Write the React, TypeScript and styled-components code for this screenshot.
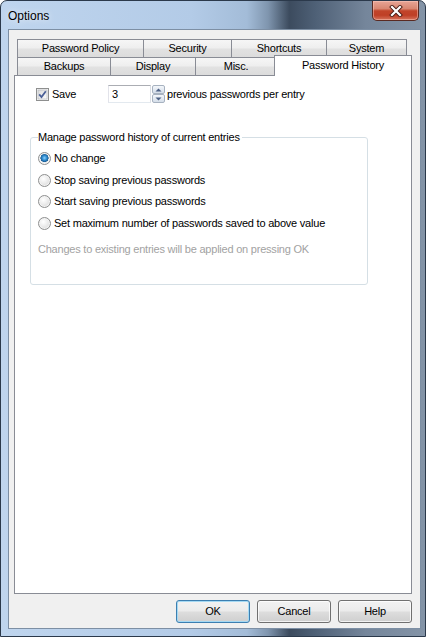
import React from 'react';
import styled, { createGlobalStyle } from 'styled-components';

const Global = createGlobalStyle`
  html, body { margin: 0; padding: 0; background: #ffffff; }
  body {
    width: 426px; height: 637px; overflow: hidden;
    font-family: "Liberation Sans", Arial, sans-serif;
    font-size: 11px; line-height: 13px; color: #000;
    letter-spacing: -0.22px;
  }
  * { box-sizing: border-box; }
`;

const Window = styled.div`
  width: 426px;
  height: 637px;
  border: 1px solid #2b394b;
  border-radius: 7px 7px 0 0;
  background: linear-gradient(90deg, #bfd5ee 0%, #b3cbe7 45%, #a3bcd8 58%, #7f95ae 63%, #3c4b5e 68%, #4e6076 74%, #75869b 86%, #8494a7 100%);
  display: flex;
  flex-direction: column;
  padding: 0 4px 7px 7px;
  overflow: hidden;
`;

const TitleBar = styled.div`
  height: 28px;
  display: flex;
  align-items: flex-start;
  justify-content: space-between;
`;

const Title = styled.div`
  font-size: 12px;
  line-height: 14px;
  letter-spacing: 0;
  margin-top: 8px;
  color: #000;
  text-shadow: 0 0 6px rgba(255, 255, 255, 0.9);
`;

const CloseButton = styled.div`
  width: 47px;
  height: 20px;
  margin-right: 2px;
  border: 1px solid #5a2a22;
  border-top: none;
  border-radius: 0 0 5px 5px;
  background: linear-gradient(180deg, #e8a596 0%, #d98772 40%, #c1442a 52%, #bf3f26 75%, #d6735c 100%);
  box-shadow: inset 0 0 0 1px rgba(255, 210, 200, 0.45);
  display: flex;
  align-items: center;
  justify-content: center;
`;

const Client = styled.div`
  flex: 1;
  background: #f0f0f0;
  border: 1px solid #7d8fa4;
  display: flex;
  flex-direction: column;
  padding: 9px 8px 5px 5px;
`;

const TabRow = styled.div`
  display: flex;
  height: 18px;
  padding-left: 3px;
  align-items: flex-start;
`;

const Tab = styled.div<{ $w: number; $selected?: boolean; $first?: boolean }>`
  width: ${p => p.$w}px;
  flex: none;
  height: ${p => (p.$selected ? 21 : 18)}px;
  margin-top: ${p => (p.$selected ? -2 : 0)}px;
  margin-left: ${p => (p.$first ? 0 : p.$selected ? -3 : -1)}px;
  border: 1px solid #898c95;
  border-bottom: none;
  background: ${p =>
    p.$selected
      ? '#ffffff'
      : 'linear-gradient(180deg, #f6f6f6 0%, #eeeeee 48%, #e2e2e2 52%, #dcdcdc 100%)'};
  display: flex;
  align-items: center;
  justify-content: center;
  position: relative;
  z-index: ${p => (p.$selected ? 2 : 1)};
  padding-bottom: ${p => (p.$selected ? 2 : 0)}px;
`;

const Panel = styled.div`
  flex: 1;
  background: #ffffff;
  border: 1px solid #898c95;
  display: flex;
  flex-direction: column;
  padding: 9px 0 0 21px;
`;

const SaveRow = styled.div`
  display: flex;
  align-items: center;
  height: 18px;
`;

const CheckLabel = styled.label`
  width: 72px;
  display: flex;
  align-items: center;
  gap: 3px;
`;

const Box = styled.span`
  width: 13px;
  height: 13px;
  display: inline-flex;
  flex: none;
`;

const SpinEdit = styled.div`
  display: flex;
  align-items: stretch;
  height: 18px;
`;

const Edit = styled.div`
  width: 43px;
  height: 18px;
  border: 1px solid #abadb3;
  border-left-color: #e2e3ea;
  border-right-color: #dbdfe6;
  border-bottom-color: #e3e9ef;
  background: #fff;
  padding: 2px 0 0 3px;
`;

const SpinButtons = styled.div`
  width: 13px;
  margin-left: 1px;
  display: flex;
  flex-direction: column;
`;

const SpinBtn = styled.div`
  flex: 1;
  border: 1px solid #a7b2c0;
  border-radius: 2px;
  background: linear-gradient(180deg, #f4f7fb 0%, #e4eaf2 50%, #d5dee9 100%);
  display: flex;
  align-items: center;
  justify-content: center;
`;

const AfterText = styled.span`
  margin-left: 2px;
`;

const Group = styled.fieldset`
  width: 338px;
  margin: 28px 0 0 -6px;
  border: 1px solid #d5dfe5;
  border-radius: 3px;
  padding: 0 0 28px 7px;
  min-width: 0;
`;

const Legend = styled.legend`
  padding: 0 2px 0 0;
  font-size: 11px;
  line-height: 13px;
`;

const RadioList = styled.div`
  display: flex;
  flex-direction: column;
  gap: 8.67px;
  margin-top: 8px;
`;

const RadioRow = styled.label`
  display: flex;
  align-items: center;
  gap: 3px;
  height: 13px;
`;

const Radio = styled.span<{ $checked?: boolean }>`
  width: 13px;
  height: 13px;
  border-radius: 50%;
  flex: none;
  border: 1px solid #8e8f8f;
  background: ${p =>
    p.$checked
      ? 'radial-gradient(circle at 50% 45%, #8fd2ff 0%, #2e8cd0 28%, #1a5c94 48%, #e8eaec 52%, #f6f6f6 100%)'
      : 'radial-gradient(circle at 40% 35%, #ffffff 0%, #eeeeee 40%, #d0d0d0 100%)'};
  box-shadow: inset 0 0 0 1px #f4f4f4;
`;

const Note = styled.div`
  color: #a2a2a2;
  margin-top: 13px;
`;

const ButtonRow = styled.div`
  display: flex;
  justify-content: flex-end;
  gap: 7px;
  margin-top: 6px;
  height: 23px;
`;

const Button = styled.div<{ $default?: boolean }>`
  width: 74px;
  height: 23px;
  border: 1px solid ${p => (p.$default ? '#3c7fb1' : '#707070')};
  border-radius: 3px;
  background: linear-gradient(180deg, #f2f2f2 0%, #ebebeb 48%, #dddddd 52%, #cfcfcf 100%);
  box-shadow: inset 0 0 0 1px ${p => (p.$default ? '#a5d9f3' : 'rgba(255,255,255,0.75)')};
  display: flex;
  align-items: center;
  justify-content: center;
`;

const CheckBox = () => (
  <Box>
    <svg width="13" height="13" viewBox="0 0 13 13">
      <defs>
        <linearGradient id="cbg" x1="0" y1="0" x2="1" y2="1">
          <stop offset="0" stopColor="#dcdcdc" />
          <stop offset="1" stopColor="#fbfbfb" />
        </linearGradient>
      </defs>
      <rect x="0.5" y="0.5" width="12" height="12" fill="#f4f4f4" stroke="#8e8f8f" />
      <rect x="2" y="2" width="9" height="9" fill="url(#cbg)" stroke="#aeb3b9" strokeWidth="0.6" />
      <path d="M3.2 6.3 L5.5 9 L9.8 3.3" fill="none" stroke="#4a5f97" strokeWidth="1.8" />
    </svg>
  </Box>
);

const Arrow = ({ up }: { up?: boolean }) => (
  <svg width="7" height="4" viewBox="0 0 7 4">
    <path d={up ? 'M0.5 3.5 L3.5 0.5 L6.5 3.5 Z' : 'M0.5 0.5 L3.5 3.5 L6.5 0.5 Z'} fill="#4d6185" />
  </svg>
);

const tabsRow1 = [
  { label: 'Password Policy', w: 127 },
  { label: 'Security', w: 89 },
  { label: 'Shortcuts', w: 96 },
  { label: 'System', w: 81 },
];

const tabsRow2 = [
  { label: 'Backups', w: 94 },
  { label: 'Display', w: 86 },
  { label: 'Misc.', w: 82 },
  { label: 'Password History', w: 138, selected: true },
];

const radios = [
  { label: 'No change', checked: true },
  { label: 'Stop saving previous passwords' },
  { label: 'Start saving previous passwords' },
  { label: 'Set maximum number of passwords saved to above value' },
];

export default function App() {
  return (
    <>
      <Global />
      <Window>
        <TitleBar>
          <Title>Options</Title>
          <CloseButton>
            <svg width="14" height="12" viewBox="0 0 14 12">
              <path d="M3 2 L11 10 M11 2 L3 10" stroke="#4a1c14" strokeWidth="4" strokeLinecap="square" />
              <path d="M3 2 L11 10 M11 2 L3 10" stroke="#ffffff" strokeWidth="2.2" strokeLinecap="square" />
            </svg>
          </CloseButton>
        </TitleBar>
        <Client>
          <TabRow>
            {tabsRow1.map((t, i) => (
              <Tab key={t.label} $w={t.w} $first={i === 0}>{t.label}</Tab>
            ))}
          </TabRow>
          <TabRow>
            {tabsRow2.map((t, i) => (
              <Tab key={t.label} $w={t.w} $first={i === 0} $selected={t.selected}>{t.label}</Tab>
            ))}
          </TabRow>
          <Panel>
            <SaveRow>
              <CheckLabel>
                <CheckBox />
                Save
              </CheckLabel>
              <SpinEdit>
                <Edit>3</Edit>
                <SpinButtons>
                  <SpinBtn><Arrow up /></SpinBtn>
                  <SpinBtn><Arrow /></SpinBtn>
                </SpinButtons>
              </SpinEdit>
              <AfterText>previous passwords per entry</AfterText>
            </SaveRow>
            <Group>
              <Legend>Manage password history of current entries</Legend>
              <RadioList>
                {radios.map(r => (
                  <RadioRow key={r.label}>
                    <Radio $checked={r.checked} />
                    {r.label}
                  </RadioRow>
                ))}
              </RadioList>
              <Note>Changes to existing entries will be applied on pressing OK</Note>
            </Group>
          </Panel>
          <ButtonRow>
            <Button $default>OK</Button>
            <Button>Cancel</Button>
            <Button>Help</Button>
          </ButtonRow>
        </Client>
      </Window>
    </>
  );
}
